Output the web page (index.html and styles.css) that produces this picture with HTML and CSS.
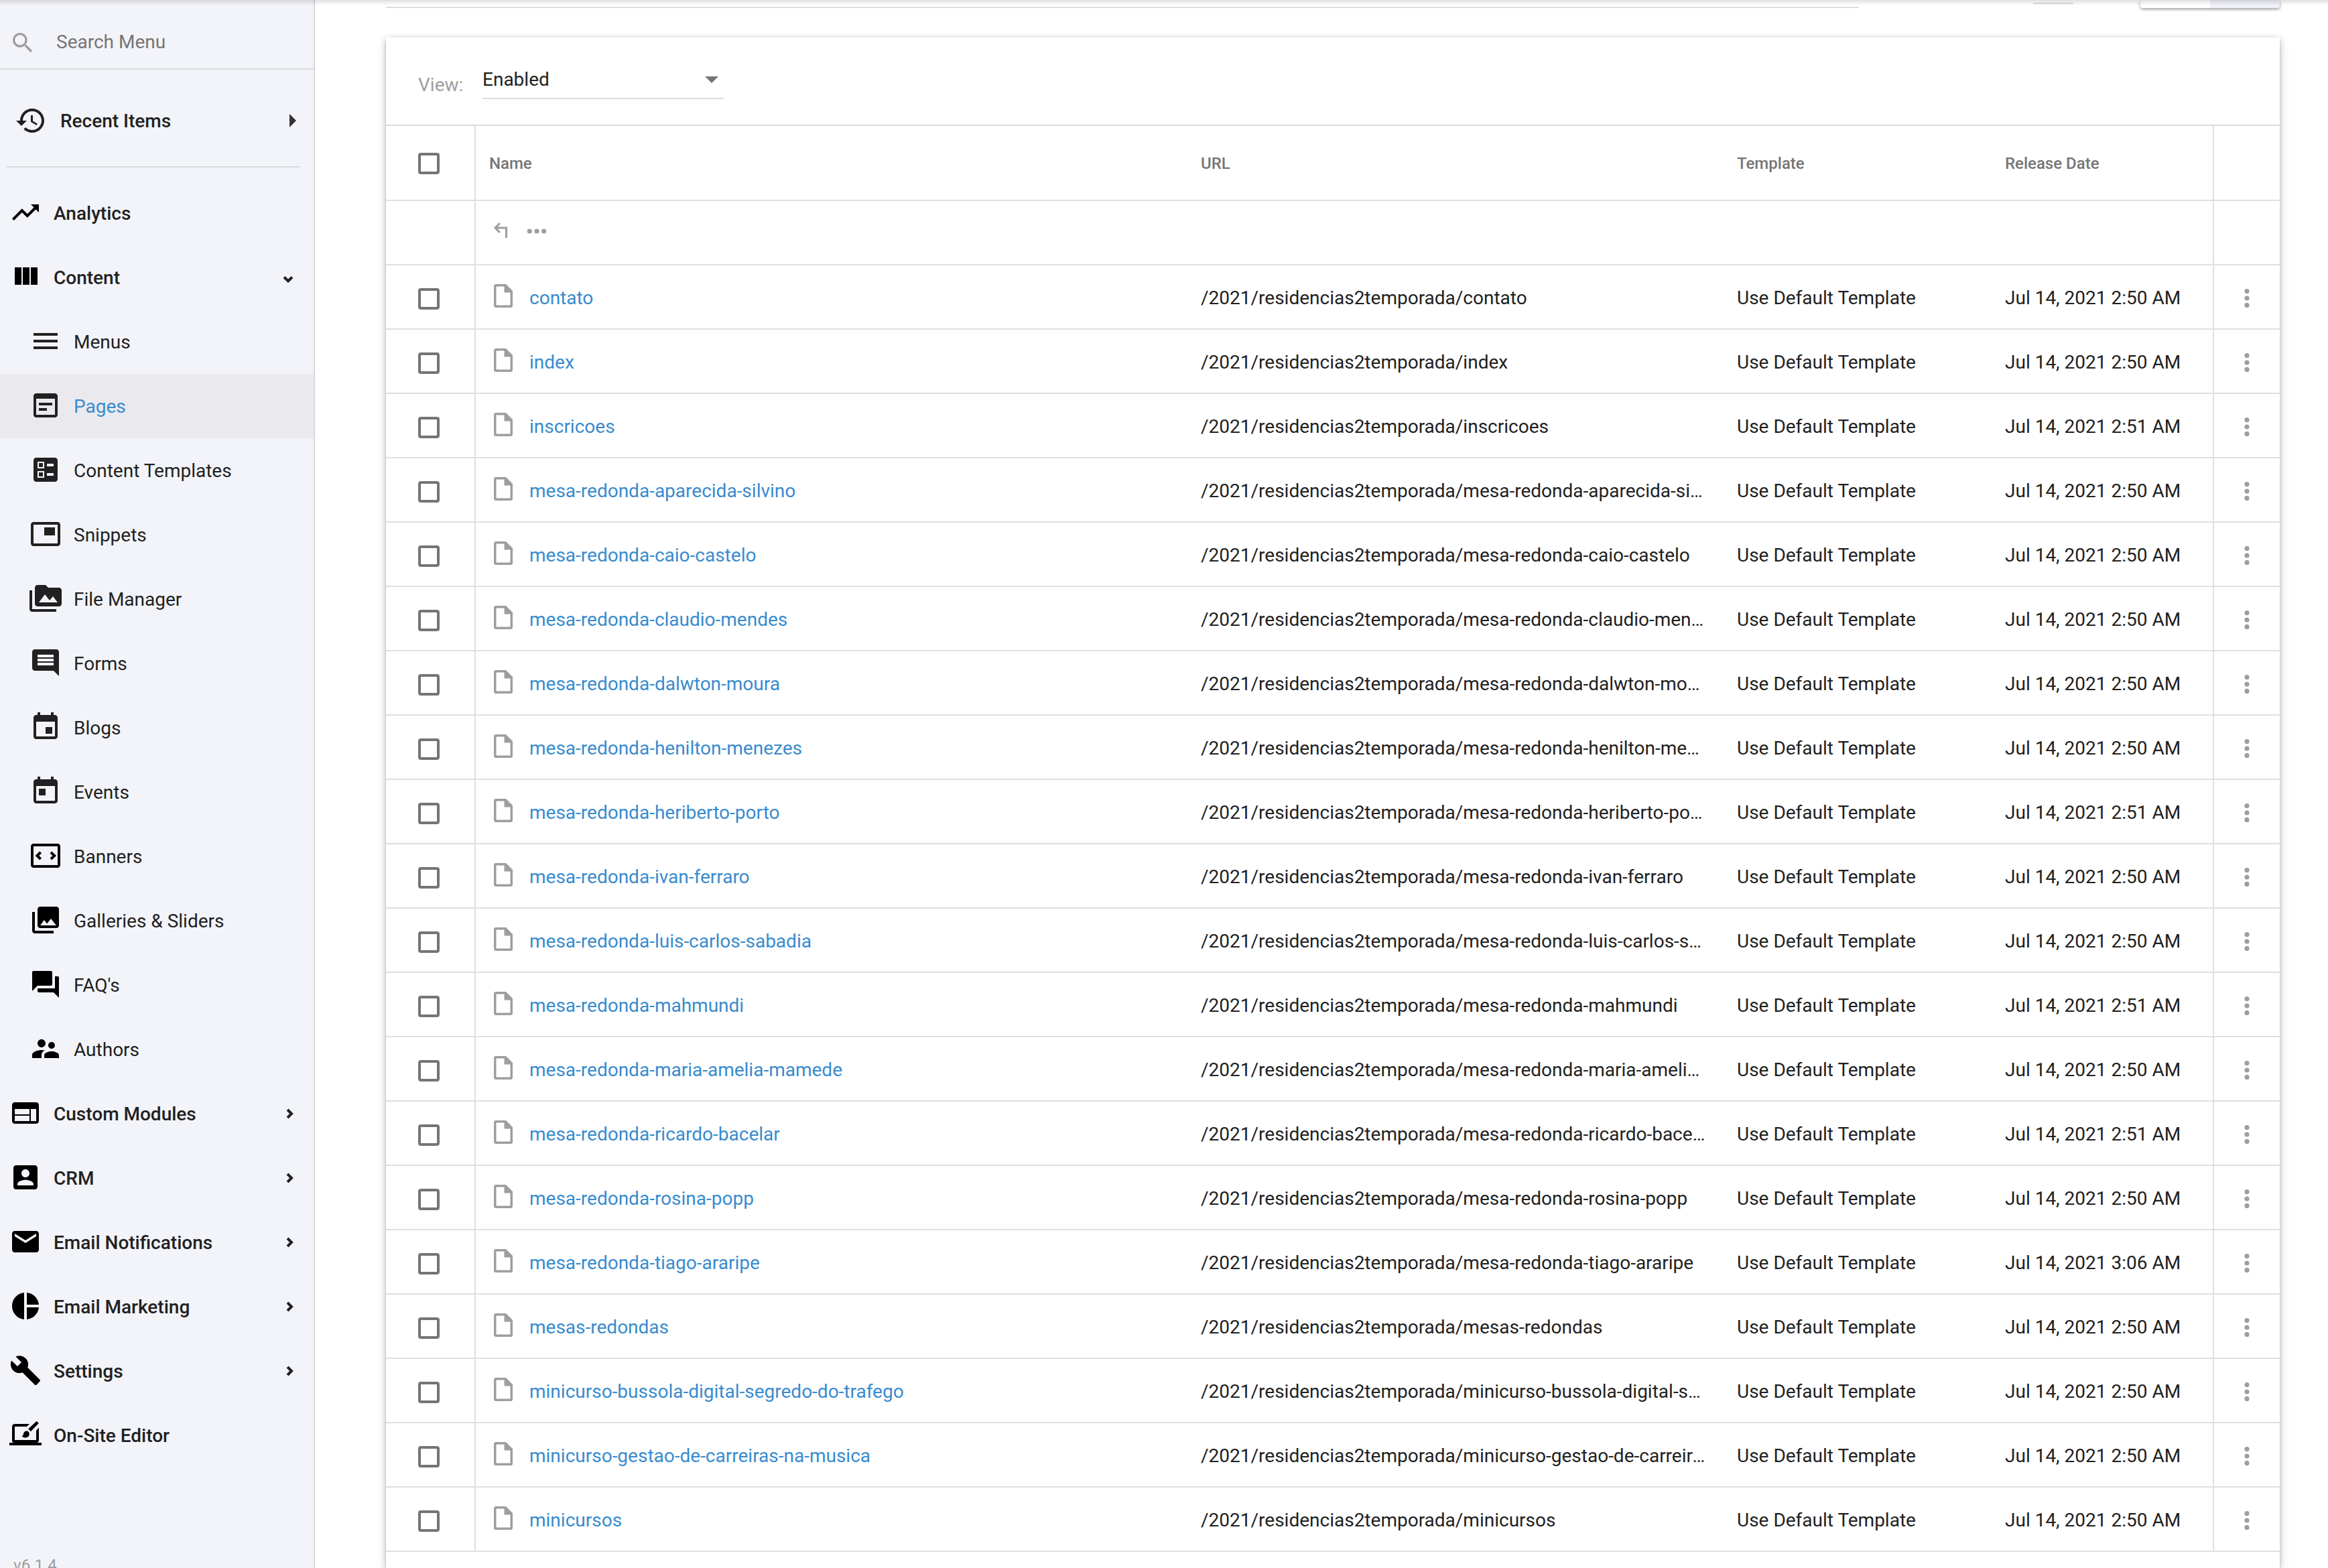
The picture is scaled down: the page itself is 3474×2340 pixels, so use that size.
FILE: index.html
```html
<!DOCTYPE html>
<html lang="en">
<head>
    <meta charset="UTF-8">
    <meta name="viewport" content="width=device-width, initial-scale=1.0">
    <title>Pages</title>
    <link rel="stylesheet" href="styles.css">
</head>
<body>

    <!-- shared icons -->
    <svg class="sprite" aria-hidden="true">
        <symbol id="i-right" viewBox="0 0 32 32"><path d="M13 10l6 6-6 6" fill="none" stroke="#212121" stroke-width="4"/></symbol>
        <symbol id="i-down" viewBox="0 0 32 32"><path d="M8 15.5l6 6 6-6" fill="none" stroke="#212121" stroke-width="4"/></symbol>
        <symbol id="i-file" viewBox="0 0 28 36"><path fill-rule="evenodd" d="M3 0h15l10 10v22a3 3 0 0 1-3 3H3a3 3 0 0 1-3-3V3a3 3 0 0 1 3-3zm.5 3.500v28h21V12.500H15.500v-9z"/></symbol>
        <symbol id="i-more" viewBox="0 0 8 28"><circle cx="4" cy="3.600" r="3.600"/><circle cx="4" cy="14" r="3.600"/><circle cx="4" cy="24.400" r="3.600"/></symbol>
    </svg>

    <div class="app">
        <aside class="sidebar">
            <div class="search">
                <svg class="search-icon" viewBox="0 0 24 24"><path d="M15.500 14h-.79l-.28-.27A6.471 6.471 0 0 0 16 9.500 6.500 6.500 0 1 0 9.500 16c1.610 0 3.090-.59 4.230-1.570l.27.28v.79l5 4.990L20.490 19l-4.990-5zm-6 0C7.010 14 5 11.990 5 9.500S7.010 5 9.500 5 14 7.010 14 9.500 11.990 14 9.500 14z"/></svg>
                <input type="text" class="search-input" placeholder="Search Menu" aria-label="Search Menu">
            </div>

            <a href="#" class="recent">
                <svg class="icon" viewBox="0 0 24 24"><path d="M13 3c-4.970 0-9 4.030-9 9H1l3.890 3.890.07.14L9 12H6c0-3.870 3.130-7 7-7s7 3.130 7 7-3.130 7-7 7c-1.930 0-3.680-.79-4.940-2.060l-1.420 1.420C8.270 19.990 10.510 21 13 21c4.970 0 9-4.030 9-9s-4.030-9-9-9zm-1 5v5l4.280 2.540.72-1.210-3.500-2.080V8H12z"/></svg>
                <span>Recent Items</span>
                <svg class="triangle" viewBox="0 0 10 20"><path d="M0 0l10 10L0 20z"/></svg>
            </a>

            <nav class="menu">
                <a href="#" class="item top"><svg class="icon" viewBox="0 0 24 24"><path d="M16 6l2.290 2.290-4.880 4.880-4-4L2 16.590 3.410 18l6-6 4 4 6.300-6.290L22 12V6z"/></svg><span>Analytics</span></a>
                <a href="#" class="item top"><svg class="icon" viewBox="0 0 24 24"><path d="M10 18h5V5h-5v13zm-6 0h5V5H4v13zM16 5v13h5V5h-5z"/></svg><span>Content</span><svg class="chevron"><use href="#i-down"/></svg></a>

                <a href="#" class="item"><svg class="icon" viewBox="0 0 24 24"><path d="M3 18h18v-2H3v2zm0-5h18v-2H3v2zm0-7v2h18V6H3z"/></svg><span>Menus</span></a>
                <a href="#" class="item active"><svg class="icon" viewBox="0 0 24 24"><path d="M19 3H5c-1.100 0-2 .9-2 2v14c0 1.100.9 2 2 2h14c1.100 0 2-.9 2-2V5c0-1.100-.9-2-2-2zm0 16H5V7h14v12zm-2-7H7v-2h10v2zm-4 4H7v-2h6v2z"/></svg><span>Pages</span></a>
                <a href="#" class="item"><svg class="icon" viewBox="0 0 24 24"><path d="M13 9.500h5v-2h-5v2zm0 7h5v-2h-5v2zm6 4.500H5c-1.100 0-2-.9-2-2V5c0-1.100.9-2 2-2h14c1.100 0 2 .9 2 2v14c0 1.100-.9 2-2 2zM6 11h5V6H6v5zm1-4h3v3H7V7zM6 18h5v-5H6v5zm1-4h3v3H7v-3z"/></svg><span>Content Templates</span></a>
                <a href="#" class="item"><svg class="icon" viewBox="0 0 24 24"><path d="M19 7h-8v6h8V7zm2-4H3c-1.100 0-2 .9-2 2v14c0 1.100.9 1.980 2 1.980h18c1.100 0 2-.88 2-1.980V5c0-1.100-.9-2-2-2zm0 16.010H3V4.980h18v14.030z"/></svg><span>Snippets</span></a>
                <a href="#" class="item"><svg class="icon" viewBox="0 0 24 24"><path d="M2 6H0v5h.01L0 20c0 1.100.9 2 2 2h18v-2H2V6zm20-2h-8l-2-2H6c-1.100 0-1.990.9-1.990 2L4 16c0 1.100.9 2 2 2h16c1.100 0 2-.9 2-2V6c0-1.100-.9-2-2-2zM7 15l4.500-6 3.500 4.510 2.500-3.010L21 15H7z"/></svg><span>File Manager</span></a>
                <a href="#" class="item"><svg class="icon" viewBox="0 0 24 24"><path d="M21.990 4c0-1.100-.89-2-1.990-2H4c-1.100 0-2 .9-2 2v12c0 1.100.9 2 2 2h14l4 4-.01-18zM18 14H6v-2h12v2zm0-3H6V9h12v2zm0-3H6V6h12v2z"/></svg><span>Forms</span></a>
                <a href="#" class="item"><svg class="icon" viewBox="0 0 24 24"><path d="M17 12h-5v5h5v-5zM16 1v2H8V1H6v2H5c-1.110 0-1.990.9-1.990 2L3 19c0 1.100.89 2 2 2h14c1.100 0 2-.9 2-2V5c0-1.100-.9-2-2-2h-1V1h-2zm3 18H5V8h14v11z"/></svg><span>Blogs</span></a>
                <a href="#" class="item"><svg class="icon" viewBox="0 0 24 24"><path d="M19 3h-1V1h-2v2H8V1H6v2H5c-1.110 0-1.990.9-1.990 2L3 19c0 1.100.89 2 2 2h14c1.100 0 2-.9 2-2V5c0-1.100-.9-2-2-2zm0 16H5V8h14v11zM7 10h5v5H7v-5z"/></svg><span>Events</span></a>
                <a href="#" class="item"><svg class="icon black" viewBox="0 0 24 24"><path d="M21 3H3c-1.100 0-2 .9-2 2v14c0 1.100.9 2 2 2h18c1.100 0 2-.9 2-2V5c0-1.100-.9-2-2-2zm0 16H3V5h18v14z"/><path d="M8.300 9.400L5.700 12l2.600 2.600M16 9.400l2.600 2.600-2.600 2.600" fill="none" stroke="#000" stroke-width="2"/></svg><span>Banners</span></a>
                <a href="#" class="item"><svg class="icon black" viewBox="0 0 24 24"><path d="M22 16V4c0-1.100-.9-2-2-2H8c-1.100 0-2 .9-2 2v12c0 1.100.9 2 2 2h12c1.100 0 2-.9 2-2zm-11-4l2.030 2.710L16 11l4 5H8l3-4zM2 6v14c0 1.100.9 2 2 2h14v-2H4V6H2z"/></svg><span>Galleries &amp; Sliders</span></a>
                <a href="#" class="item"><svg class="icon black" viewBox="0 0 24 24"><path d="M21 6h-2v9H6v2c0 .55.45 1 1 1h11l4 4V7c0-.55-.45-1-1-1zm-4 6V3c0-.55-.45-1-1-1H3c-.55 0-1 .45-1 1v14l4-4h10c.55 0 1-.45 1-1z"/></svg><span>FAQ's</span></a>
                <a href="#" class="item"><svg class="icon black" viewBox="0 0 24 24"><path d="M16.500 12c1.380 0 2.490-1.120 2.490-2.500S17.880 7 16.500 7C15.120 7 14 8.120 14 9.500s1.120 2.500 2.500 2.500zM9 11c1.660 0 2.990-1.340 2.990-3S10.660 5 9 5C7.340 5 6 6.340 6 8s1.340 3 3 3zm7.500 3c-1.830 0-5.500.92-5.500 2.750V19h11v-2.250c0-1.830-3.670-2.750-5.500-2.750zM9 13c-2.330 0-7 1.170-7 3.500V19h7v-2.250c0-.85.33-2.340 2.370-3.470C10.500 13.100 9.660 13 9 13z"/></svg><span>Authors</span></a>

                <a href="#" class="item top"><svg class="icon" viewBox="0 0 24 24"><path d="M20 4H4c-1.100 0-1.990.9-1.990 2L2 18c0 1.100.9 2 2 2h16c1.100 0 2-.9 2-2V6c0-1.100-.9-2-2-2zm-5 14H4v-4h11v4zm0-5H4V9h11v4zm5 5h-4V9h4v9z"/></svg><span>Custom Modules</span><svg class="chevron"><use href="#i-right"/></svg></a>
                <a href="#" class="item top"><svg class="icon" viewBox="0 0 24 24"><path d="M3 5v14c0 1.100.89 2 2 2h14c1.100 0 2-.9 2-2V5c0-1.100-.9-2-2-2H5c-1.110 0-2 .9-2 2zm12 4c0 1.660-1.340 3-3 3s-3-1.340-3-3 1.340-3 3-3 3 1.340 3 3zm-9 8c0-2 4-3.100 6-3.100s6 1.100 6 3.100v1H6v-1z"/></svg><span>CRM</span><svg class="chevron"><use href="#i-right"/></svg></a>
                <a href="#" class="item top"><svg class="icon" viewBox="0 0 24 24"><path d="M20 4H4c-1.100 0-1.990.9-1.990 2L2 18c0 1.100.9 2 2 2h16c1.100 0 2-.9 2-2V6c0-1.100-.9-2-2-2zm0 4l-8 5-8-5V6l8 5 8-5v2z"/></svg><span>Email Notifications</span><svg class="chevron"><use href="#i-right"/></svg></a>
                <a href="#" class="item top"><svg class="icon" viewBox="0 0 24 24"><path d="M11 2v20c-5.070-.5-9-4.790-9-10s3.930-9.500 9-10zm2.030 0v8.990H22c-.47-4.740-4.240-8.520-8.970-8.990zm0 11.010V22c4.740-.47 8.500-4.250 8.970-8.990h-8.970z"/></svg><span>Email Marketing</span><svg class="chevron"><use href="#i-right"/></svg></a>
                <a href="#" class="item top"><svg class="icon" viewBox="0 0 24 24"><path d="M22.700 19l-9.100-9.100c.9-2.300.4-5-1.500-6.900-2-2-5-2.400-7.400-1.300L9 6 6 9 1.600 4.700C.4 7.100.9 10.100 2.900 12.100c1.900 1.900 4.600 2.400 6.900 1.500l9.100 9.100c.4.4 1 .4 1.400 0l2.300-2.300c.5-.4.5-1.100.1-1.400z"/></svg><span>Settings</span><svg class="chevron"><use href="#i-right"/></svg></a>
                <a href="#" class="item top"><svg class="icon" viewBox="0 0 24 24"><path d="M0 18h3.300A1.800 1.800 0 0 1 2 16.200V6c0-1.100.9-2 2-2h11l-2 2H4v10h16V9l2-2.200v9.400c0 .9-.5 1.600-1.300 1.800H24v2H0z"/><path d="M20.300 1.900l1.600 1.600-5.900 6.100-1.900-1.900zM12.800 9.300c1.300 0 2.200 1 2.100 2.400-.1 1.500-1.400 2.500-3.100 2.500-1.100 0-2.100-.5-2.600-1.300.8 0 1.200-.4 1.300-1.400.2-1.300 1.100-2.200 2.300-2.200z"/></svg><span>On-Site Editor</span></a>
            </nav>

            <div class="version">v6.1.4</div>
        </aside>

        <main class="main">
            <div class="filters">
                <input type="text" class="filter-input" aria-label="Search">
                <button class="filter-small" aria-label="Filter"></button>
                <div class="toggle">
                    <button class="toggle-btn" aria-label="Grid"></button>
                    <button class="toggle-btn on" aria-label="List"></button>
                </div>
            </div>

            <section class="card">
                <div class="toolbar">
                    <label for="view">View:</label>
                    <div class="select">
                        <select id="view">
                            <option>Enabled</option>
                        </select>
                        <svg class="select-arrow" viewBox="0 0 20 10"><path d="M0 0h20L10 10z"/></svg>
                    </div>
                </div>

                <table class="pages">
                    <colgroup>
                        <col class="col-check"><col><col class="col-url"><col class="col-template"><col class="col-date"><col class="col-more">
                    </colgroup>
                    <thead>
                        <tr>
                            <th class="check"><input type="checkbox" aria-label="Select all"></th>
                            <th>Name</th>
                            <th>URL</th>
                            <th>Template</th>
                            <th>Release Date</th>
                            <th class="more"></th>
                        </tr>
                    </thead>
                    <tbody>
                        <tr>
                            <td class="check"></td>
                            <td><a href="#" class="up" aria-label="Up"><svg viewBox="0 0 80 24"><path d="M10 2L3 9l7 7M3 9h16.500v15" fill="none" stroke="#9e9e9e" stroke-width="3"/><circle cx="54.300" cy="14" r="3.600"/><circle cx="65" cy="14" r="3.600"/><circle cx="75.600" cy="14" r="3.600"/></svg></a></td>
                            <td></td>
                            <td></td>
                            <td></td>
                            <td class="more"></td>
                        </tr>
                    </tbody>
                    <tbody id="rows"></tbody>
                </table>
            </section>
        </main>
    </div>

    <script src="script.js"></script>

</body>
</html>
```
FILE: styles.css
```css
* {
    box-sizing: border-box;
}
body {
    margin: 0;
    overflow: hidden;
    background: #fff;
    color: #212121;
    font-family: Roboto, "Liberation Sans", sans-serif;
    font-size: 28px;
    line-height: 32px;
}
body::before {
    content: "";
    position: fixed;
    top: 0;
    left: 0;
    right: 0;
    height: 8px;
    background: linear-gradient(rgba(0, 0, 0, 0.12), rgba(0, 0, 0, 0));
    z-index: 2;
}
a {
    color: inherit;
    text-decoration: none;
}
input, select, button {
    margin: 0;
    padding: 0;
    border: 0;
    background: none;
    color: inherit;
    font: inherit;
}
svg {
    display: block;
    flex: none;
}
.sprite {
    position: absolute;
    width: 0;
    height: 0;
}
.app {
    display: flex;
    height: 100vh;
}

/* sidebar */
.sidebar {
    flex: none;
    width: 470px;
    overflow: hidden;
    background: #f3f4f9;
    border-right: 2px solid #d7d8dc;
}
.search {
    display: flex;
    align-items: center;
    gap: 30px;
    height: 104px;
    padding: 22px 14px 0;
    border-bottom: 2px solid #dadbde;
}
.search-icon {
    width: 40px;
    height: 40px;
    margin-top: 4px;
    fill: #9e9e9e;
}
.search-input {
    flex: 1;
    min-width: 0;
    height: 40px;
}
.search-input::placeholder {
    color: #757575;
    opacity: 1;
}
.recent {
    display: flex;
    align-items: center;
    gap: 20px;
    height: 146px;
    margin: 0 20px 20px 10px;
    padding: 8px 6px 0 12px;
    border-bottom: 2px solid #dadbde;
    font-weight: 500;
}
.icon {
    width: 48px;
    height: 48px;
    fill: #212121;
}
.black, .top .icon {
    fill: #000;
}
.triangle {
    width: 10px;
    height: 20px;
    margin-left: auto;
    fill: #333;
}
.item {
    display: flex;
    align-items: center;
    gap: 18px;
    height: 96px;
    padding: 0 20px 0 44px;
}
.item .icon {
    margin-bottom: 2px;
}
.item span, .recent span {
    padding-top: 2px;
}
.top {
    padding-left: 14px;
    font-weight: 500;
}
.active {
    background: #eae9ee;
    color: #388bce;
}
.chevron {
    width: 32px;
    height: 32px;
    margin-left: auto;
}
.version {
    padding: 132px 20px 0;
    color: #9e9e9e;
    font-size: 24px;
    line-height: 28px;
}

/* main area */
.main {
    flex: 1;
    min-width: 0;
    display: flex;
    flex-direction: column;
    padding: 0 72px 0 106px;
}
.filters {
    flex: none;
    display: flex;
    align-items: flex-start;
    height: 56px;
}
.filter-input {
    flex: 1;
    height: 12px;
    border-bottom: 2px solid #dcdcdc;
}
.filter-small {
    width: 60px;
    height: 6px;
    margin: 0 100px 0 260px;
    border-bottom: 2px solid #dcdcdc;
}
.toggle {
    display: flex;
    width: 208px;
    height: 12px;
    overflow: hidden;
    border-radius: 0 0 4px 4px;
    box-shadow: 0 2px 4px rgba(0, 0, 0, 0.4);
}
.toggle-btn {
    flex: 1;
    background: #fff;
}
.toggle-btn.on {
    background: #f0f1f8;
}
.card {
    flex: 1;
    background: #fff;
    box-shadow: 0 2px 10px rgba(0, 0, 0, 0.2), 0 4px 4px rgba(0, 0, 0, 0.14), 0 6px 20px rgba(0, 0, 0, 0.08);
}
.toolbar {
    display: flex;
    align-items: flex-end;
    height: 132px;
    padding: 0 48px 38px;
    border-bottom: 2px solid #dcdcdc;
}
.toolbar label {
    min-width: 96px;
    color: #9e9e9e;
    line-height: 42px;
}
.select {
    position: relative;
    width: 360px;
}
.select select {
    display: block;
    width: 100%;
    height: 58px;
    padding-top: 2px;
    appearance: none;
    border-bottom: 2px solid #dcdcdc;
}
.select-arrow {
    position: absolute;
    top: 24px;
    right: 8px;
    width: 20px;
    height: 10px;
    fill: #757575;
    pointer-events: none;
}

/* table */
.pages {
    width: 100%;
    table-layout: fixed;
    border-collapse: separate;
    border-spacing: 0;
}
.col-check {
    width: 134px;
}
.col-url {
    width: 800px;
}
.col-template {
    width: 400px;
}
.col-date {
    width: 330px;
}
.col-more {
    width: 100px;
}
.pages th, .pages td {
    height: 96px;
    padding: 4px 26px 0 20px;
    border-bottom: 2px solid #dfdfdf;
    overflow: hidden;
    text-align: left;
    text-overflow: ellipsis;
    white-space: nowrap;
}
.pages th {
    height: 112px;
    padding-top: 2px;
    color: #757575;
    font-size: 24px;
    font-weight: 500;
}
.pages .check {
    padding-left: 48px;
    padding-right: 0;
    border-right: 2px solid #dfdfdf;
}
.pages .more {
    padding-left: 45px;
    padding-right: 0;
    border-left: 2px solid #dfdfdf;
}
.check input {
    display: block;
    width: 32px;
    height: 32px;
    appearance: none;
    border: 4px solid #757575;
    border-radius: 4px;
}
td.check input {
    margin-top: 2px;
}
.name {
    display: flex;
    align-items: center;
    gap: 25px;
    padding-left: 7px;
    color: #388bce;
}
.name svg {
    width: 28px;
    height: 36px;
    margin-bottom: 6px;
    fill: #9e9e9e;
}
/* the icon is taller than the line, keep it from pushing the text down */
.name {
    height: 32px;
}
.up {
    display: block;
    padding: 0 0 12px 6px;
}
.up svg {
    width: 80px;
    height: 24px;
    fill: #9e9e9e;
}
.more button {
    display: block;
}
.more svg {
    width: 8px;
    height: 28px;
    fill: #9e9e9e;
}
```
FILE: script.js
```js
const base = "/2021/residencias2temporada/";

// page name, release time
const pages = [
    ["contato", "2:50"],
    ["index", "2:50"],
    ["inscricoes", "2:51"],
    ["mesa-redonda-aparecida-silvino", "2:50"],
    ["mesa-redonda-caio-castelo", "2:50"],
    ["mesa-redonda-claudio-mendes", "2:50"],
    ["mesa-redonda-dalwton-moura", "2:50"],
    ["mesa-redonda-henilton-menezes", "2:50"],
    ["mesa-redonda-heriberto-porto", "2:51"],
    ["mesa-redonda-ivan-ferraro", "2:50"],
    ["mesa-redonda-luis-carlos-sabadia", "2:50"],
    ["mesa-redonda-mahmundi", "2:51"],
    ["mesa-redonda-maria-amelia-mamede", "2:50"],
    ["mesa-redonda-ricardo-bacelar", "2:51"],
    ["mesa-redonda-rosina-popp", "2:50"],
    ["mesa-redonda-tiago-araripe", "3:06"],
    ["mesas-redondas", "2:50"],
    ["minicurso-bussola-digital-segredo-do-trafego", "2:50"],
    ["minicurso-gestao-de-carreiras-na-musica", "2:50"],
    ["minicursos", "2:50"]
];

document.getElementById("rows").innerHTML = pages.map(([name, time]) => `
    <tr>
        <td class="check"><input type="checkbox" aria-label="${name}"></td>
        <td><a href="#" class="name"><svg><use href="#i-file"/></svg>${name}</a></td>
        <td>${base}${name}</td>
        <td>Use Default Template</td>
        <td>Jul 14, 2021 ${time} AM</td>
        <td class="more"><button aria-label="More"><svg><use href="#i-more"/></svg></button></td>
    </tr>`).join("");
```
